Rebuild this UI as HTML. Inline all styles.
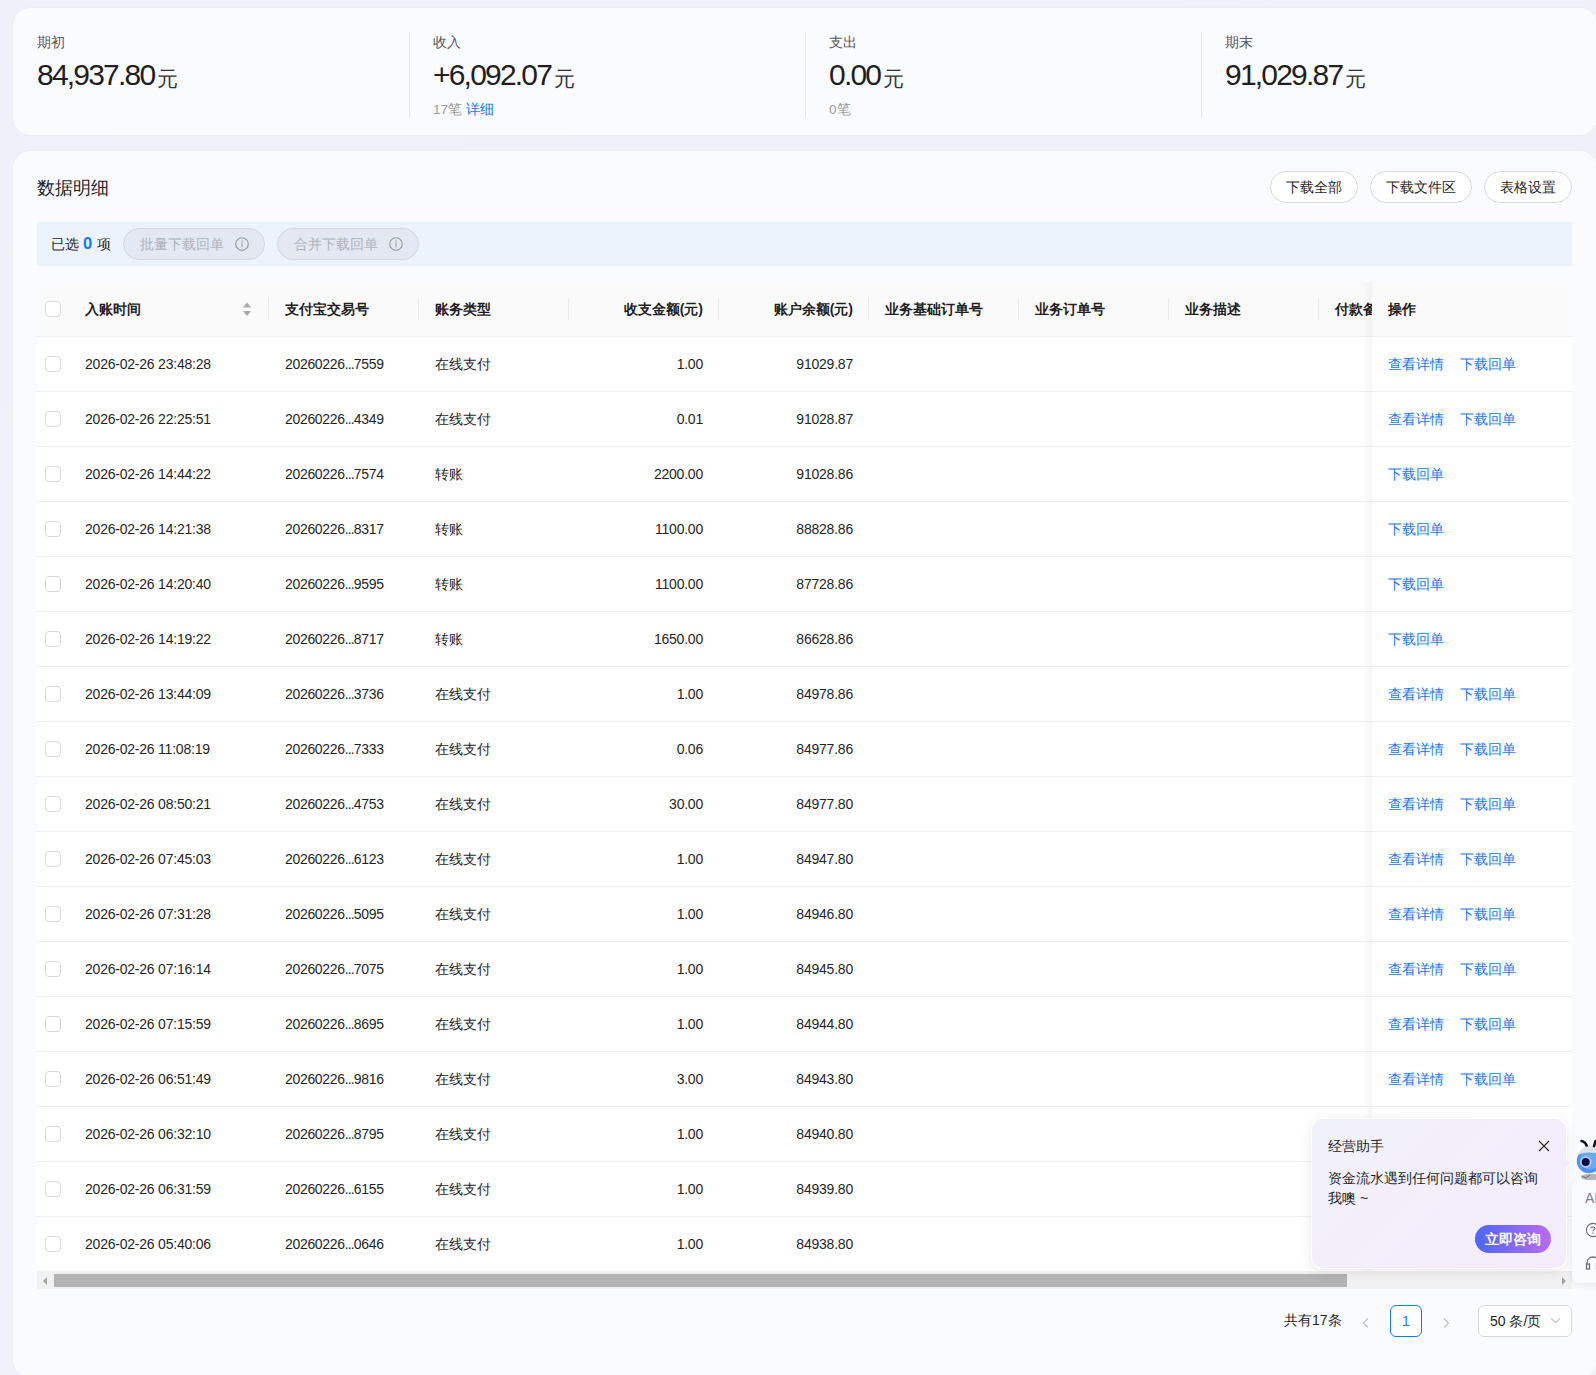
<!DOCTYPE html>
<html><head><meta charset="utf-8"><style>
*{box-sizing:border-box;margin:0;padding:0}
html,body{width:1596px;height:1375px;overflow:hidden}
body{position:relative;font-family:"Liberation Sans",sans-serif;color:#1f1f1f;background:linear-gradient(90deg,rgba(241,240,250,0.7) 0%,rgba(236,241,250,0) 50%,rgba(238,241,246,0.6) 100%),linear-gradient(180deg,#eff0f9 0%,#eef2f9 45%,#eff3fa 100%)}
.card{position:absolute;background:#fafbfe;border-radius:17px;box-shadow:0 0 1.5px rgba(20,30,60,0.07)}
.c1{left:13px;top:8px;width:1584px;height:127px}
.c2{left:13px;top:151px;width:1584px;height:1226px}
.scol{position:absolute;top:0;width:396px;height:127px}
.sdiv{position:absolute;left:0;top:24px;width:1px;height:86px;background:#e6e8ee}
.slab{position:absolute;left:24px;top:25px;font-size:13.5px;line-height:20px;color:#555}
.snum{position:absolute;left:24px;top:47px;line-height:40px;white-space:nowrap}
.snum .n{font-size:30px;letter-spacing:-1.8px;color:#1f1f1f}
.snum .y{font-size:20.5px;color:#333;margin-left:3px;position:relative;top:1px}
.ssub{position:absolute;left:24px;top:92px;font-size:13.5px;line-height:20px;white-space:nowrap}
.g{color:#999}
.lk{color:#1677ff}
.title{position:absolute;left:37px;top:175px;font-size:18px;line-height:26px;color:#1f1f1f}
.btn{position:absolute;top:171px;height:32px;border:1px solid #d9d9d9;border-radius:16px;background:#fff;font-size:14px;line-height:30px;text-align:center;color:#1f1f1f}
.selbar{position:absolute;left:37px;top:222px;width:1535px;height:44px;background:#edf3fd}
.sel{position:absolute;left:14px;top:11px;font-size:14px;line-height:20px;white-space:nowrap}
.sel b{color:#1677ff;font-size:16.5px;margin-right:1px;position:relative;top:-0.5px}
.pill{position:absolute;top:228px;height:32px;border:1px solid #d4d6dc;border-radius:16px;background:#e3e8f2;font-size:14px;line-height:30px;color:#b0b2ba;white-space:nowrap}
.pill span{position:absolute;left:16px;top:0}
.pill .ii{position:absolute;right:15px;top:8px}
.tbl{position:absolute;left:37px;top:282px;width:1535px;height:1007px;background:#fff;overflow:hidden;border-radius:8px 0 0 0}
.thead{position:absolute;left:0;top:0;width:1535px;height:55px;background:#fafafa;border-bottom:1px solid #f0f0f0}
.th{position:absolute;height:54px;line-height:54px;font-size:14px;font-weight:bold;white-space:nowrap;color:#1f1f1f}
.th.r{text-align:right}
.vd{position:absolute;top:16px;width:1px;height:22px;background:#ececec}
.sort{position:absolute;left:205px;top:19px}
.cb{position:absolute;width:16px;height:16px;border:1px solid #d9d9d9;border-radius:4px;background:#fff}
.tr{position:absolute;left:0;width:1535px;height:55px;border-bottom:1px solid #f0f0f0}
.td{position:absolute;top:0;height:54px;line-height:54px;font-size:14px;white-space:nowrap;color:#1f1f1f}
.td.r{text-align:right}
.num{letter-spacing:-0.22px}
.tno{letter-spacing:-0.32px}
.dots{letter-spacing:-0.85px}
.fix{position:absolute;left:1335px;top:0;width:200px;height:990px;background:#fff}
.fixhead{position:absolute;left:0;top:0;width:200px;height:55px;background:#fafafa;border-bottom:1px solid #f0f0f0}
.ftr{position:absolute;left:0;width:200px;height:55px;border-bottom:1px solid #f0f0f0}
.fixshadow{position:absolute;left:1325px;top:0;width:10px;height:990px;background:linear-gradient(90deg,rgba(0,0,0,0),rgba(0,0,0,0.04))}
.sb{position:absolute;left:0;top:989px;width:1535px;height:18px;background:#f1f1f1}
.thumb{position:absolute;left:17px;top:3px;width:1293px;height:13px;background:#b3b3b3}
.sbl{position:absolute;left:6px;top:5.5px;width:0;height:0;border-top:4px solid transparent;border-bottom:4px solid transparent;border-right:4px solid #a3a3a3}
.sbr{position:absolute;left:1525px;top:5.5px;width:0;height:0;border-top:4px solid transparent;border-bottom:4px solid transparent;border-left:4px solid #a3a3a3}
.pg-total{position:absolute;left:1284px;top:1309px;font-size:14px;line-height:22px;white-space:nowrap}
.pg-prev{position:absolute;left:1361px;top:1317px}
.pg-next{position:absolute;left:1441px;top:1317px}
.pg-cur{position:absolute;left:1390px;top:1305px;width:32px;height:32px;border:1px solid #1677ff;border-radius:6px;background:#fff;color:#1677ff;font-size:14px;line-height:30px;text-align:center}
.pg-size{position:absolute;left:1478px;top:1305px;width:94px;height:32px;border:1px solid #d9d9d9;border-radius:6px;background:#fff;font-size:14px;line-height:30px;padding-left:11px;white-space:nowrap}
.chev{position:absolute;left:71px;top:11px;width:11px;height:7px}
.popup{position:absolute;left:1311px;top:1118px;width:256px;height:151px;border-radius:12px;background:linear-gradient(135deg,#f1f1fb,#f4ecfb);border:1px solid rgba(255,255,255,0.95);box-shadow:0 3px 12px rgba(40,40,80,0.10)}
.pt{position:absolute;left:16px;top:17px;font-size:14px;line-height:20px;color:#1f1f1f}
.px{position:absolute;left:226px;top:21px}
.pb{position:absolute;left:16px;top:49px;font-size:14px;line-height:20px;color:#1f1f1f;white-space:nowrap}
.pbtn{position:absolute;left:163px;top:106px;width:76px;height:28px;border-radius:14px;background:linear-gradient(90deg,#4b67f6,#b86bf5);color:#fff;font-size:14px;line-height:28px;text-align:center}
.parrow{position:absolute;left:1562px;top:1158.5px;width:8px;height:8px;background:#f4ecfb;border-top:1px solid #fff;border-right:1px solid #fff;transform:rotate(45deg)}
.side{position:absolute;left:1572px;top:1180px;width:60px;height:103px;border-radius:8px;background:#fafbfe;box-shadow:0 2px 8px rgba(0,0,0,0.08)}
.ai{position:absolute;left:13px;top:10px;font-size:14px;line-height:16px;color:#7a7a90}
.q{position:absolute;left:13px;top:42px}
.hs{position:absolute;left:13px;top:76px}
.mascot{position:absolute;left:1572px;top:1136px}

</style></head><body>
<div class="card c1">
<div class="scol" style="left:0px">
<div class="slab">期初</div>
<div class="snum"><span class="n">84,937.80</span><span class="y">元</span></div>
</div>
<div class="scol" style="left:396px">
<div class="sdiv"></div>
<div class="slab">收入</div>
<div class="snum"><span class="n">+6,092.07</span><span class="y">元</span></div>
<div class="ssub"><span class="g">17笔</span> <span class="lk">详细</span></div>
</div>
<div class="scol" style="left:792px">
<div class="sdiv"></div>
<div class="slab">支出</div>
<div class="snum"><span class="n">0.00</span><span class="y">元</span></div>
<div class="ssub"><span class="g">0笔</span></div>
</div>
<div class="scol" style="left:1188px">
<div class="sdiv"></div>
<div class="slab">期末</div>
<div class="snum"><span class="n">91,029.87</span><span class="y">元</span></div>
</div>
</div>
<div class="card c2"></div>
<div class="title">数据明细</div>
<div class="btn" style="left:1270px;width:88px">下载全部</div>
<div class="btn" style="left:1370px;width:102px">下载文件区</div>
<div class="btn" style="left:1484px;width:88px">表格设置</div>
<div class="selbar"><span class="sel">已选 <b>0</b> 项</span></div>
<div class="pill" style="left:123px;width:142px"><span>批量下载回单</span><svg class="ii" width="14" height="14" viewBox="0 0 14 14"><circle cx="7" cy="7" r="6.3" fill="none" stroke="#9a9a9e" stroke-width="1.15"/><rect x="6.4" y="3.4" width="1.25" height="1.3" fill="#a0a0a6"/><rect x="6.4" y="5.6" width="1.25" height="4.6" fill="#a8a8ae"/></svg></div>
<div class="pill" style="left:277px;width:142px"><span>合并下载回单</span><svg class="ii" width="14" height="14" viewBox="0 0 14 14"><circle cx="7" cy="7" r="6.3" fill="none" stroke="#9a9a9e" stroke-width="1.15"/><rect x="6.4" y="3.4" width="1.25" height="1.3" fill="#a0a0a6"/><rect x="6.4" y="5.6" width="1.25" height="4.6" fill="#a8a8ae"/></svg></div>
<div class="tbl">
<div class="thead"></div>
<div class="th" style="left:48px;top:0">入账时间</div>
<div class="th" style="left:248px;top:0">支付宝交易号</div>
<div class="th" style="left:398px;top:0">账务类型</div>
<div class="th r" style="right:869px;top:0">收支金额(元)</div>
<div class="th r" style="right:719px;top:0">账户余额(元)</div>
<div class="th" style="left:848px;top:0">业务基础订单号</div>
<div class="th" style="left:998px;top:0">业务订单号</div>
<div class="th" style="left:1148px;top:0">业务描述</div>
<div class="th" style="left:1298px;top:0">付款备注</div>
<div class="vd" style="left:231px"></div>
<div class="vd" style="left:381px"></div>
<div class="vd" style="left:531px"></div>
<div class="vd" style="left:681px"></div>
<div class="vd" style="left:831px"></div>
<div class="vd" style="left:981px"></div>
<div class="vd" style="left:1131px"></div>
<div class="vd" style="left:1281px"></div>
<div class="sort"><svg width="10" height="16" viewBox="0 0 10 16"><path d="M5 1.6 L9.1 6.6 L0.9 6.6 Z" fill="#a9a9a9"/><path d="M5 14.9 L9.1 9.9 L0.9 9.9 Z" fill="#a9a9a9"/></svg></div>
<div class="cb" style="left:8px;top:19px"></div>
<div class="tr" style="top:55px">
<div class="cb" style="left:8px;top:19px"></div>
<div class="td num" style="left:48px">2026-02-26 23:48:28</div>
<div class="td num tno" style="left:248px">20260226<span class="dots">...</span>7559</div>
<div class="td" style="left:398px">在线支付</div>
<div class="td r num" style="right:869px">1.00</div>
<div class="td r num" style="right:719px">91029.87</div>
</div>
<div class="tr" style="top:110px">
<div class="cb" style="left:8px;top:19px"></div>
<div class="td num" style="left:48px">2026-02-26 22:25:51</div>
<div class="td num tno" style="left:248px">20260226<span class="dots">...</span>4349</div>
<div class="td" style="left:398px">在线支付</div>
<div class="td r num" style="right:869px">0.01</div>
<div class="td r num" style="right:719px">91028.87</div>
</div>
<div class="tr" style="top:165px">
<div class="cb" style="left:8px;top:19px"></div>
<div class="td num" style="left:48px">2026-02-26 14:44:22</div>
<div class="td num tno" style="left:248px">20260226<span class="dots">...</span>7574</div>
<div class="td" style="left:398px">转账</div>
<div class="td r num" style="right:869px">2200.00</div>
<div class="td r num" style="right:719px">91028.86</div>
</div>
<div class="tr" style="top:220px">
<div class="cb" style="left:8px;top:19px"></div>
<div class="td num" style="left:48px">2026-02-26 14:21:38</div>
<div class="td num tno" style="left:248px">20260226<span class="dots">...</span>8317</div>
<div class="td" style="left:398px">转账</div>
<div class="td r num" style="right:869px">1100.00</div>
<div class="td r num" style="right:719px">88828.86</div>
</div>
<div class="tr" style="top:275px">
<div class="cb" style="left:8px;top:19px"></div>
<div class="td num" style="left:48px">2026-02-26 14:20:40</div>
<div class="td num tno" style="left:248px">20260226<span class="dots">...</span>9595</div>
<div class="td" style="left:398px">转账</div>
<div class="td r num" style="right:869px">1100.00</div>
<div class="td r num" style="right:719px">87728.86</div>
</div>
<div class="tr" style="top:330px">
<div class="cb" style="left:8px;top:19px"></div>
<div class="td num" style="left:48px">2026-02-26 14:19:22</div>
<div class="td num tno" style="left:248px">20260226<span class="dots">...</span>8717</div>
<div class="td" style="left:398px">转账</div>
<div class="td r num" style="right:869px">1650.00</div>
<div class="td r num" style="right:719px">86628.86</div>
</div>
<div class="tr" style="top:385px">
<div class="cb" style="left:8px;top:19px"></div>
<div class="td num" style="left:48px">2026-02-26 13:44:09</div>
<div class="td num tno" style="left:248px">20260226<span class="dots">...</span>3736</div>
<div class="td" style="left:398px">在线支付</div>
<div class="td r num" style="right:869px">1.00</div>
<div class="td r num" style="right:719px">84978.86</div>
</div>
<div class="tr" style="top:440px">
<div class="cb" style="left:8px;top:19px"></div>
<div class="td num" style="left:48px">2026-02-26 11:08:19</div>
<div class="td num tno" style="left:248px">20260226<span class="dots">...</span>7333</div>
<div class="td" style="left:398px">在线支付</div>
<div class="td r num" style="right:869px">0.06</div>
<div class="td r num" style="right:719px">84977.86</div>
</div>
<div class="tr" style="top:495px">
<div class="cb" style="left:8px;top:19px"></div>
<div class="td num" style="left:48px">2026-02-26 08:50:21</div>
<div class="td num tno" style="left:248px">20260226<span class="dots">...</span>4753</div>
<div class="td" style="left:398px">在线支付</div>
<div class="td r num" style="right:869px">30.00</div>
<div class="td r num" style="right:719px">84977.80</div>
</div>
<div class="tr" style="top:550px">
<div class="cb" style="left:8px;top:19px"></div>
<div class="td num" style="left:48px">2026-02-26 07:45:03</div>
<div class="td num tno" style="left:248px">20260226<span class="dots">...</span>6123</div>
<div class="td" style="left:398px">在线支付</div>
<div class="td r num" style="right:869px">1.00</div>
<div class="td r num" style="right:719px">84947.80</div>
</div>
<div class="tr" style="top:605px">
<div class="cb" style="left:8px;top:19px"></div>
<div class="td num" style="left:48px">2026-02-26 07:31:28</div>
<div class="td num tno" style="left:248px">20260226<span class="dots">...</span>5095</div>
<div class="td" style="left:398px">在线支付</div>
<div class="td r num" style="right:869px">1.00</div>
<div class="td r num" style="right:719px">84946.80</div>
</div>
<div class="tr" style="top:660px">
<div class="cb" style="left:8px;top:19px"></div>
<div class="td num" style="left:48px">2026-02-26 07:16:14</div>
<div class="td num tno" style="left:248px">20260226<span class="dots">...</span>7075</div>
<div class="td" style="left:398px">在线支付</div>
<div class="td r num" style="right:869px">1.00</div>
<div class="td r num" style="right:719px">84945.80</div>
</div>
<div class="tr" style="top:715px">
<div class="cb" style="left:8px;top:19px"></div>
<div class="td num" style="left:48px">2026-02-26 07:15:59</div>
<div class="td num tno" style="left:248px">20260226<span class="dots">...</span>8695</div>
<div class="td" style="left:398px">在线支付</div>
<div class="td r num" style="right:869px">1.00</div>
<div class="td r num" style="right:719px">84944.80</div>
</div>
<div class="tr" style="top:770px">
<div class="cb" style="left:8px;top:19px"></div>
<div class="td num" style="left:48px">2026-02-26 06:51:49</div>
<div class="td num tno" style="left:248px">20260226<span class="dots">...</span>9816</div>
<div class="td" style="left:398px">在线支付</div>
<div class="td r num" style="right:869px">3.00</div>
<div class="td r num" style="right:719px">84943.80</div>
</div>
<div class="tr" style="top:825px">
<div class="cb" style="left:8px;top:19px"></div>
<div class="td num" style="left:48px">2026-02-26 06:32:10</div>
<div class="td num tno" style="left:248px">20260226<span class="dots">...</span>8795</div>
<div class="td" style="left:398px">在线支付</div>
<div class="td r num" style="right:869px">1.00</div>
<div class="td r num" style="right:719px">84940.80</div>
</div>
<div class="tr" style="top:880px">
<div class="cb" style="left:8px;top:19px"></div>
<div class="td num" style="left:48px">2026-02-26 06:31:59</div>
<div class="td num tno" style="left:248px">20260226<span class="dots">...</span>6155</div>
<div class="td" style="left:398px">在线支付</div>
<div class="td r num" style="right:869px">1.00</div>
<div class="td r num" style="right:719px">84939.80</div>
</div>
<div class="tr" style="top:935px">
<div class="cb" style="left:8px;top:19px"></div>
<div class="td num" style="left:48px">2026-02-26 05:40:06</div>
<div class="td num tno" style="left:248px">20260226<span class="dots">...</span>0646</div>
<div class="td" style="left:398px">在线支付</div>
<div class="td r num" style="right:869px">1.00</div>
<div class="td r num" style="right:719px">84938.80</div>
</div>
<div class="fix">
<div class="fixhead"><div class="th" style="left:16px;top:0">操作</div></div>
<div class="ftr" style="top:55px"><div class="td" style="left:16px"><span class="lk">查看详情</span><span class="lk" style="margin-left:16px">下载回单</span></div></div>
<div class="ftr" style="top:110px"><div class="td" style="left:16px"><span class="lk">查看详情</span><span class="lk" style="margin-left:16px">下载回单</span></div></div>
<div class="ftr" style="top:165px"><div class="td" style="left:16px"><span class="lk">下载回单</span></div></div>
<div class="ftr" style="top:220px"><div class="td" style="left:16px"><span class="lk">下载回单</span></div></div>
<div class="ftr" style="top:275px"><div class="td" style="left:16px"><span class="lk">下载回单</span></div></div>
<div class="ftr" style="top:330px"><div class="td" style="left:16px"><span class="lk">下载回单</span></div></div>
<div class="ftr" style="top:385px"><div class="td" style="left:16px"><span class="lk">查看详情</span><span class="lk" style="margin-left:16px">下载回单</span></div></div>
<div class="ftr" style="top:440px"><div class="td" style="left:16px"><span class="lk">查看详情</span><span class="lk" style="margin-left:16px">下载回单</span></div></div>
<div class="ftr" style="top:495px"><div class="td" style="left:16px"><span class="lk">查看详情</span><span class="lk" style="margin-left:16px">下载回单</span></div></div>
<div class="ftr" style="top:550px"><div class="td" style="left:16px"><span class="lk">查看详情</span><span class="lk" style="margin-left:16px">下载回单</span></div></div>
<div class="ftr" style="top:605px"><div class="td" style="left:16px"><span class="lk">查看详情</span><span class="lk" style="margin-left:16px">下载回单</span></div></div>
<div class="ftr" style="top:660px"><div class="td" style="left:16px"><span class="lk">查看详情</span><span class="lk" style="margin-left:16px">下载回单</span></div></div>
<div class="ftr" style="top:715px"><div class="td" style="left:16px"><span class="lk">查看详情</span><span class="lk" style="margin-left:16px">下载回单</span></div></div>
<div class="ftr" style="top:770px"><div class="td" style="left:16px"><span class="lk">查看详情</span><span class="lk" style="margin-left:16px">下载回单</span></div></div>
<div class="ftr" style="top:825px"><div class="td" style="left:16px"><span class="lk">查看详情</span><span class="lk" style="margin-left:16px">下载回单</span></div></div>
<div class="ftr" style="top:880px"><div class="td" style="left:16px"><span class="lk">查看详情</span><span class="lk" style="margin-left:16px">下载回单</span></div></div>
<div class="ftr" style="top:935px"><div class="td" style="left:16px"><span class="lk">查看详情</span><span class="lk" style="margin-left:16px">下载回单</span></div></div>
</div>
<div class="fixshadow"></div>
<div class="sb"><div class="sbl"></div><div class="thumb"></div><div class="sbr"></div></div>
</div>
<div class="pg-total">共有17条</div>
<svg class="pg-prev" width="10" height="12" viewBox="0 0 10 12"><path d="M7 1.5 L2.5 6 L7 10.5" fill="none" stroke="#bfbfbf" stroke-width="1.2"/></svg>
<div class="pg-cur">1</div>
<svg class="pg-next" width="10" height="12" viewBox="0 0 10 12"><path d="M3 1.5 L7.5 6 L3 10.5" fill="none" stroke="#bfbfbf" stroke-width="1.2"/></svg>
<div class="pg-size">50 条/页<svg class="chev" width="12" height="8" viewBox="0 0 12 8"><path d="M1 1.5 L6 6.5 L11 1.5" fill="none" stroke="#bfbfbf" stroke-width="1.2"/></svg></div>
<div class="popup"><div class="pt">经营助手</div><svg class="px" width="12" height="12" viewBox="0 0 12 12"><path d="M1 1 L11 11 M11 1 L1 11" stroke="#333" stroke-width="1.3"/></svg><div class="pb">资金流水遇到任何问题都可以咨询<br>我噢 ~</div><div class="pbtn"><b>立即咨询</b></div></div>
<div class="parrow"></div>
<div class="side"><div class="ai">AI</div><svg class="q" width="16" height="16" viewBox="0 0 16 16"><circle cx="8" cy="8" r="6.6" fill="none" stroke="#6b6b80" stroke-width="1.1"/><path d="M6 6.2 C6 4.6 10 4.6 10 6.3 C10 7.6 8 7.6 8 9.2" fill="none" stroke="#6b6b80" stroke-width="1.1"/><circle cx="8" cy="11.2" r="0.7" fill="#6b6b80"/></svg><svg class="hs" width="16" height="14" viewBox="0 0 16 14"><path d="M2 9 V7 C2 3 5 1 8 1 C11 1 14 3 14 7 V9" fill="none" stroke="#6b6b80" stroke-width="1.3"/><rect x="1.5" y="8" width="3" height="5" fill="none" stroke="#6b6b80" stroke-width="1.3"/><rect x="11.5" y="8" width="3" height="5" fill="none" stroke="#6b6b80" stroke-width="1.3"/></svg></div>
<div class="mascot"><svg width="26" height="46" viewBox="0 0 26 46"><ellipse cx="19" cy="41" rx="10" ry="3.2" fill="#b4b6bb"/><path d="M10 40 L14 42 L18 39" stroke="#6a6a70" stroke-width="1" fill="none"/><path d="M9.5 5 C12 5.5 14 7.5 15 10.5" stroke="#0d0d2a" stroke-width="2.6" fill="none" stroke-linecap="round"/><path d="M23.5 5 C23 7 22.5 8.5 22 10.5" stroke="#0d0d2a" stroke-width="2.6" fill="none" stroke-linecap="round"/><circle cx="17" cy="25" r="12.2" fill="#4d93ef"/><circle cx="18.5" cy="23.5" r="10" fill="#67aaf6"/><path d="M6 19 C8 12 13 10.5 17 10.5 C21 10.5 26 12 27 15 L27 18 C22 16 12 15.5 6 19 Z" fill="#dfe3ea"/><circle cx="13.7" cy="26" r="5.8" fill="#c2cdf0"/><circle cx="13.7" cy="26" r="4" fill="#0b0b4e"/></svg></div>
</body></html>
